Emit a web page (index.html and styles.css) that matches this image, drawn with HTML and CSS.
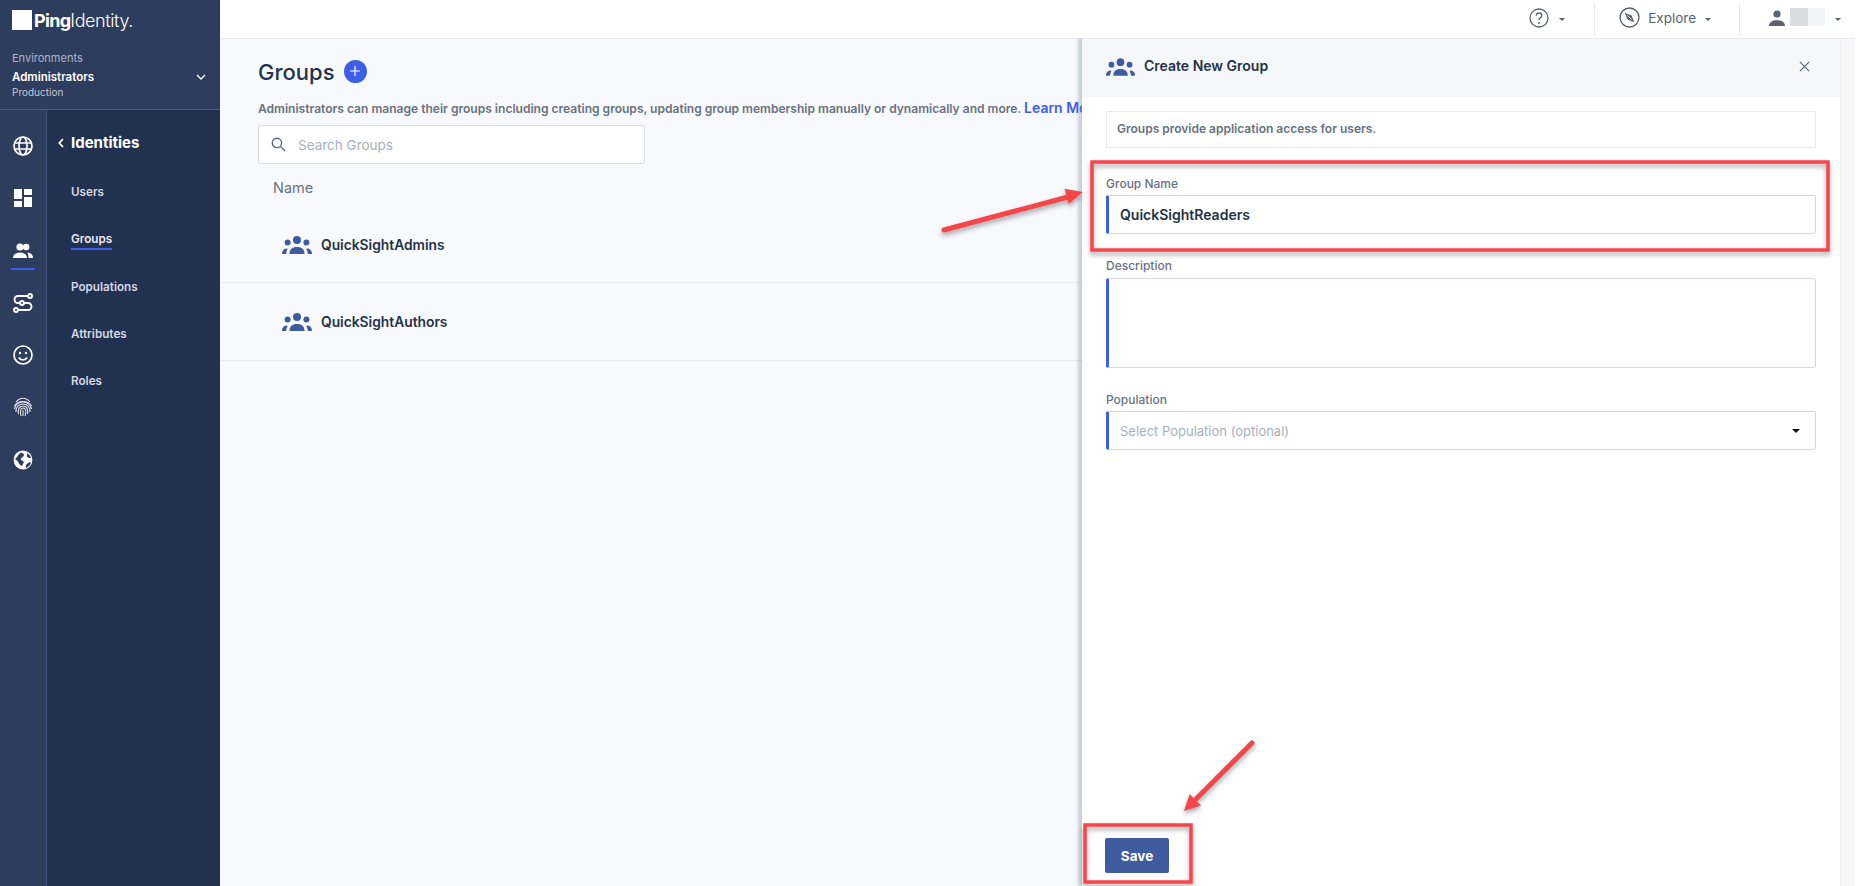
FILE: index.html
```html
<!DOCTYPE html>
<html lang="en">
<head>
<meta charset="utf-8">
<title>Groups</title>
<link rel="stylesheet" href="styles.css">
</head>
<body>
<svg class="defs" width="0" height="0" aria-hidden="true">
  <defs>
    <symbol id="group" viewBox="0 0 30 18">
      <circle cx="15" cy="4" r="4"/>
      <circle cx="5.600" cy="6.600" r="3"/>
      <circle cx="24.400" cy="6.600" r="3"/>
      <path d="M7.500 18c0-4.600 2.600-7 7.500-7s7.500 2.400 7.500 7z"/>
      <path d="M0 18c0-2.800 1.300-4.700 3.800-5.400.9-.2 1.600 0 2 .4-1 1.300-1.500 3-1.600 5z"/>
      <path d="M30 18c0-2.800-1.300-4.700-3.800-5.400-.9-.2-1.600 0-2 .4 1 1.300 1.500 3 1.600 5z"/>
    </symbol>
  </defs>
</svg>
<div class="app">
  <aside class="sidebar">
    <div class="brand">
      <div class="logo"><span class="logo-mark"></span><span class="logo-ping">Ping</span><span class="logo-id">Identity.</span></div>
      <div class="env">
        <div>
          <div class="env-label">Environments</div>
          <div class="env-name">Administrators</div>
          <div class="env-type">Production</div>
        </div>
        <svg class="env-chev" viewBox="0 0 10 6"><path d="M1 1l4 4 4-4" fill="none" stroke="#fff" stroke-width="1.300"/></svg>
      </div>
    </div>
    <div class="nav">
      <div class="rail">
        <svg class="rail-icon" viewBox="0 0 20 20" fill="none" stroke="#fff" stroke-width="1.700"><circle cx="10" cy="10" r="9"/><ellipse cx="10" cy="10" rx="4" ry="9"/><path d="M1.800 7h16.400M1.800 13h16.400"/></svg>
        <svg class="rail-icon" viewBox="0 0 20 20" fill="#fff"><rect x="1" y="1" width="8" height="10"/><rect x="11" y="1" width="8" height="6"/><rect x="1" y="13" width="8" height="6"/><rect x="11" y="9" width="8" height="10"/></svg>
        <div class="rail-active">
          <svg class="rail-icon" viewBox="0 0 20 20" fill="#fff"><circle cx="7" cy="6" r="3.600"/><circle cx="13.200" cy="6" r="3.200"/><path d="M0 17c0-3.500 3-5.500 7-5.500s7 2 7 5.500z"/><path d="M14.500 11.600c3 .2 5.500 2 5.500 5.400h-4.500c0-2-.3-3.800-1-5.400z"/></svg>
        </div>
        <svg class="rail-icon" viewBox="0 0 20 20" fill="none" stroke="#fff" stroke-width="1.900"><path d="M15 3H5a3 3 0 0 0 0 7h10a3.200 3.200 0 0 1 0 7H6"/><circle cx="17" cy="3" r="2" fill="#2e3c5e"/><circle cx="9" cy="10" r="2" fill="#2e3c5e"/><circle cx="3" cy="17" r="2" fill="#2e3c5e"/></svg>
        <svg class="rail-icon" viewBox="0 0 20 20" fill="none" stroke="#fff" stroke-width="1.700"><circle cx="10" cy="10" r="9"/><circle cx="7" cy="8" r="1.200" fill="#fff" stroke="none"/><circle cx="13" cy="8" r="1.200" fill="#fff" stroke="none"/><path d="M5.800 12.500c1 1.700 2.500 2.500 4.200 2.500s3.200-.8 4.200-2.500"/></svg>
        <svg class="rail-icon rail-dim" viewBox="0 0 20 20" fill="none" stroke="#fff" stroke-width="1.100"><path d="M3 5c4-5 10-5 14 0"/><path d="M1.500 9c3-6 14-6 17 0"/><path d="M1.500 12c1-6 6-7 8.500-7s8 2 8.500 7"/><path d="M3 15c-.5-5 3-8 7-8s7.500 3 7 8"/><path d="M5.500 17c-1-5 1-8 4.500-8s5.500 3 4.500 8"/><path d="M8 19c-1-3-1-8 2-8s3.500 4 2 8"/><path d="M10 13v6"/></svg>
        <svg class="rail-icon" viewBox="0 0 20 20"><circle cx="10" cy="10" r="9.400" fill="#fff"/><path d="M2 9c2-1 3-5 6-6.500 1 1 3 1 3 2.500S9 7 8 8.500s1.500 2 2.500 3-1 2.500-1.500 4.500C6 15 5.500 12 4.500 11S3 10 2 9zM13 18c-.5-2 0-4 2-5 1.500-.7 2.500-.5 3-.5-.5 2.500-2.500 4.500-5 5.500zM14 3c2 1 3.500 3 4 5-2 0-3.500 0-4-1.500S14.500 4.500 14 3z" fill="#2e3c5e"/></svg>
      </div>
      <nav class="subnav">
        <div class="subnav-title"><svg class="back" viewBox="0 0 6 10"><path d="M5 1L1.300 5 5 9" fill="none" stroke="#fff" stroke-width="1.800"/></svg>Identities</div>
        <a class="subnav-item">Users</a>
        <a class="subnav-item is-active">Groups</a>
        <a class="subnav-item">Populations</a>
        <a class="subnav-item">Attributes</a>
        <a class="subnav-item">Roles</a>
      </nav>
    </div>
  </aside>

  <div class="main">
    <header class="topbar">
      <div class="top-group top-help">
        <svg class="top-icon" viewBox="0 0 20 20" fill="none" stroke="#59636e" stroke-width="1.300"><circle cx="10" cy="10" r="9"/><path d="M7.300 7.800c0-1.700 1.200-2.800 2.800-2.800s2.700 1 2.700 2.400c0 2.300-2.800 2.300-2.800 4.600"/><circle cx="10" cy="15" r=".9" fill="#59636e" stroke="none"/></svg>
        <span class="caret"></span>
      </div>
      <div class="top-group top-explore">
        <svg class="top-icon compass" viewBox="0 0 20 20" fill="none" stroke="#59636e" stroke-width="1.300"><circle cx="10" cy="10" r="9"/><path d="M5.500 5.500l6.500 2.700 2.500 6.300-6.500-2.600z" fill="#59636e" stroke="none"/><path d="M8 8l4 4" stroke="#fff" stroke-width=".8"/></svg>
        <span class="explore-text">Explore</span>
        <span class="caret"></span>
      </div>
      <div class="top-group top-user">
        <svg class="user-icon" viewBox="0 0 16 16" fill="#59636e"><circle cx="8" cy="4" r="3.600"/><path d="M0 16c0-3.800 3.400-5.800 8-5.800s8 2 8 5.800z"/></svg>
        <div class="redacted"><span class="red-a"></span><span class="red-b"></span></div>
        <span class="caret"></span>
      </div>
    </header>

    <main class="content">
      <div class="title-row">
        <h1 class="title">Groups</h1>
        <span class="add"><svg viewBox="0 0 10 10"><path d="M5 0v10M0 5h10" stroke="#fff" stroke-width="1.200"/></svg></span>
      </div>
      <p class="desc">Administrators can manage their groups including creating groups, updating group membership manually or dynamically and more. <a class="learn">Learn More</a></p>
      <div class="search">
        <svg class="search-icon" viewBox="0 0 16 16" fill="none" stroke="#59636e" stroke-width="1.400"><circle cx="6.300" cy="6.300" r="5"/><path d="M10 10l5 5"/></svg>
        <span>Search Groups</span>
      </div>
      <div class="col-head">Name</div>
      <div class="row row-first"><svg class="group-icon"><use href="#group"/></svg><span>QuickSightAdmins</span></div>
      <div class="row"><svg class="group-icon"><use href="#group"/></svg><span>QuickSightAuthors</span></div>
    </main>

    <section class="panel">
      <div class="drawer">
        <div class="drawer-head">
          <svg class="group-icon"><use href="#group"/></svg>
          <span class="drawer-title">Create New Group</span>
          <svg class="close" viewBox="0 0 12 12"><path d="M1 1l10 10M11 1L1 11" stroke="#59636e" stroke-width="1.200"/></svg>
        </div>
        <div class="drawer-body">
          <div class="info">Groups provide application access for users.</div>
          <div class="field field-name">
            <label class="label">Group Name</label>
            <div class="input value">QuickSightReaders</div>
          </div>
          <div class="field field-desc">
            <label class="label">Description</label>
            <div class="input textarea"></div>
          </div>
          <div class="field field-pop">
            <label class="label">Population</label>
            <div class="input placeholder"><span>Select Population (optional)</span><span class="caret caret-dark"></span></div>
          </div>
          <button class="save">Save</button>
        </div>
      </div>
      <div class="scrollstrip"></div>
    </section>
  </div>
</div>
<svg class="overlay" viewBox="0 0 1876 886">
  <defs>
    <filter id="shadow" x="-20%" y="-20%" width="140%" height="140%"><feDropShadow dx="0" dy="3" stdDeviation="2.500" flood-color="#000" flood-opacity=".35"/></filter>
  </defs>
  <g filter="url(#shadow)">
    <rect class="mark" x="1092" y="162" width="736" height="88"/>
    <rect class="mark" x="1085" y="825" width="106" height="57"/>
    <path class="arrow" d="M944 230L1068 197"/>
    <path class="head" d="M1083 192L1064.500 188.700L1068.700 204.100z"/>
    <path class="arrow" d="M1252 743L1196 799"/>
    <path class="head" d="M1184 811L1189.600 794L1201 805.400z"/>
  </g>
</svg>
</body>
</html>
```
FILE: styles.css
```css
* { box-sizing: border-box; }
html, body { margin: 0; height: 100%; }
body {
  width: 1876px;
  height: 886px;
  overflow: hidden;
  position: relative;
  font-family: Inter, "Liberation Sans", sans-serif;
  background: #fff;
  color: #253246;
}
.defs { position: absolute; }
.app { display: flex; height: 886px; }

/* Sidebar */
.sidebar {
  width: 220px;
  flex: none;
  display: flex;
  flex-direction: column;
  background: #233151;
  color: #fff;
}
.brand {
  height: 110px;
  padding: 10px 12px 0 12px;
  background: #2e3c5e;
  border-bottom: 1px solid #4d5a7a;
}
.logo { display: flex; align-items: center; height: 20px; color: #fff; }
.logo-mark { width: 20px; height: 20px; background: #fff; margin-right: 2px; }
.logo-ping { font-size: 18px; font-weight: 700; letter-spacing: -.7px; }
.logo-id { font-size: 18px; font-weight: 300; letter-spacing: -.4px; }
.env { display: flex; align-items: center; justify-content: space-between; margin-top: 21px; padding-right: 2px; }
.env-label { font-size: 11px; line-height: 14px; color: #aeb5c6; }
.env-name { font-size: 11.500px; line-height: 16px; margin-top: 4px; font-weight: 600; }
.env-type { font-size: 10px; line-height: 13px; margin-top: 1px; color: #c3c8d5; }
.env-chev { width: 10px; height: 6px; margin-top: 3px; }

.nav { flex: 1; display: flex; min-height: 0; }
.rail {
  width: 47px;
  flex: none;
  background: #2e3c5e;
  border-right: 1px solid #46537a;
  display: flex;
  flex-direction: column;
  align-items: center;
  padding-top: 26px;
  gap: 32.300px;
}
.rail-icon { width: 20px; height: 20px; display: block; }
.rail-dim { opacity: .85; }
.rail-active { position: relative; }
.rail-active::after {
  content: "";
  position: absolute;
  left: -2px;
  right: -2px;
  top: 27px;
  height: 2px;
  background: #3d5fe8;
}
.subnav { flex: 1; padding: 24px 0 0 24px; }
.subnav-title { position: relative; font-size: 15px; line-height: 18px; font-weight: 700; margin-bottom: 33px; }
.back { position: absolute; left: -13px; top: 4px; width: 6px; height: 10px; }
.subnav-item {
  display: table;
  font-size: 11.700px;
  line-height: 15px;
  font-weight: 600;
  color: #d4d8e2;
  margin-bottom: 32.300px;
}
.subnav-item.is-active {
  color: #e8ebf2;
  position: relative;
}
.subnav-item.is-active::after {
  content: "";
  position: absolute;
  left: 0;
  right: 0;
  top: 16px;
  height: 2px;
  background: #3d5fe8;
}

/* Main */
.main { flex: 1; min-width: 0; position: relative; display: flex; flex-direction: column; }
.topbar { height: 38px; flex: none; background: #fff; display: flex; justify-content: flex-end; align-items: stretch; position: relative; }
.top-group { display: flex; align-items: center; height: 32px; margin-top: 3px; }
.top-icon { width: 20px; height: 20px; display: block; margin-top: -3px; }
.caret { display: block; width: 0; height: 0; border-left: 3px solid transparent; border-right: 3px solid transparent; border-top: 3px solid #59636e; }
.top-help { padding-right: 29px; gap: 10px; border-right: 1px solid #e6e8ec; }
.top-explore { padding: 0 28px 0 24px; border-right: 1px solid #e6e8ec; }
.explore-text { font-size: 13.500px; color: #59636e; margin: -3px 9px 0 8px; }
.compass { width: 21px; height: 21px; }
.top-user { padding: 0 35px 0 29px; }
.user-icon { width: 16px; height: 16px; margin-top: -3px; }
.redacted { display: flex; height: 18px; margin: -5px 10px 0 5px; }
.red-a { width: 18px; background: #d9dce0; }
.red-b { width: 17px; background: #f3f4f6; }

.content {
  flex: 1;
  background: #f8f9fd;
  border-top: 1px solid #e9ebf0;
  padding-top: 18px;
  min-height: 0;
}
.title-row { display: flex; align-items: center; gap: 9px; padding-left: 38px; height: 32px; }
.title { margin: -2px 0 0; font-size: 22px; line-height: 32px; font-weight: 500; color: #253246; }
.add { width: 23px; height: 23px; border-radius: 50%; background: #3d5fe8; display: flex; align-items: center; justify-content: center; margin-top: -4px; }
.add svg { width: 10px; height: 10px; display: block; }
.desc { margin: 10px 0 0 38px; font-size: 12.050px; line-height: 17px; font-weight: 600; color: #68727f; white-space: nowrap; width: 824px; overflow: hidden; }
.learn { font-size: 14px; color: #3d5fe8; font-weight: 600; }
.search {
  margin: 8px 0 0 38px;
  width: 387px;
  height: 39px;
  background: #fff;
  border: 1px solid #d9dce2;
  border-radius: 2px;
  display: flex;
  align-items: center;
  padding-left: 12px;
  gap: 12px;
  font-size: 13.500px;
  color: #a9afb8;
}
.search-icon { width: 15px; height: 15px; flex: none; }
.col-head { margin: 15px 0 0 53px; font-size: 14.500px; line-height: 18px; color: #68727f; }
.row {
  height: 78px;
  display: flex;
  align-items: center;
  gap: 9px;
  padding-left: 62px;
  font-size: 13.800px;
  font-weight: 600;
  color: #253246;
  border-bottom: 1px solid #e9ebf0;
}
.row-first { height: 86px; padding-top: 10px; }
.group-icon { width: 30px; height: 18px; fill: #3f5ba0; flex: none; }

/* Drawer */
.panel {
  position: absolute;
  top: 38px;
  left: 862px;
  right: 0;
  bottom: 0;
  display: flex;
  background: #fff;
  padding-right: 21px;
  box-shadow: -4px 0 3px rgba(110, 118, 140, .32);
  clip-path: inset(0 0 0 -8px);
}
.drawer { flex: 1; display: flex; flex-direction: column; border-top: 1px solid #e9ebf0; min-width: 0; position: relative; }
.drawer-head { height: 58px; flex: none; background: #f5f6fa; display: flex; align-items: center; padding: 0 0 2px 24px; }
.drawer-head .group-icon { width: 29px; height: 18px; }
.drawer-title { margin: -3px 0 0 9px; font-size: 14px; font-weight: 600; color: #253246; }
.close { width: 11px; height: 11px; margin: -2px 30px 0 auto; }
.drawer-body { padding: 14px 24px 0 24px; flex: 1; position: relative; }
.info { height: 37px; border: 1px solid #e6e8ec; padding: 0 0 2px 10px; display: flex; align-items: center; font-size: 12px; font-weight: 600; color: #68727f; }
.field { display: block; }
.label { display: block; font-size: 12px; line-height: 14px; font-weight: 500; color: #68727f; margin-bottom: 4px; }
.field-name { margin-top: 29px; }
.field-desc { margin-top: 25px; }
.field-desc .label { margin-bottom: 5px; }
.field-pop { margin-top: 25px; }
.input {
  border: 1px solid #d5d8de;
  border-left: 3px solid #3d5fe8;
  border-radius: 2px;
  height: 39px;
  display: flex;
  align-items: center;
  padding-left: 11px;
  font-size: 14px;
  background: #fff;
}
.value { font-weight: 600; color: #253246; }
.textarea { height: 90px; }
.placeholder { justify-content: space-between; padding-right: 15px; color: #a9afb8; font-weight: 400; font-size: 13px; }
.caret-dark { border-left-width: 4px; border-right-width: 4px; border-top: 4px solid #111; }
.save {
  position: absolute;
  left: 23px;
  bottom: 13px;
  width: 64px;
  height: 35px;
  border: 0;
  border-radius: 2px;
  background: #3f5ba0;
  color: #fff;
  font-family: inherit;
  font-size: 13.500px;
  font-weight: 700;
}
.scrollstrip { width: 15px; flex: none; background: #f8f8f8; border-left: 1px solid #eeeeee; border-top: 1px solid #e9ebf0; }

/* Annotations */
.overlay { position: absolute; left: 0; top: 0; width: 1876px; height: 886px; pointer-events: none; }
.mark { fill: none; stroke: #f44649; stroke-width: 3.500; }
.arrow { fill: none; stroke: #f44649; stroke-width: 5; stroke-linecap: round; }
.head { fill: #f44649; }
```
